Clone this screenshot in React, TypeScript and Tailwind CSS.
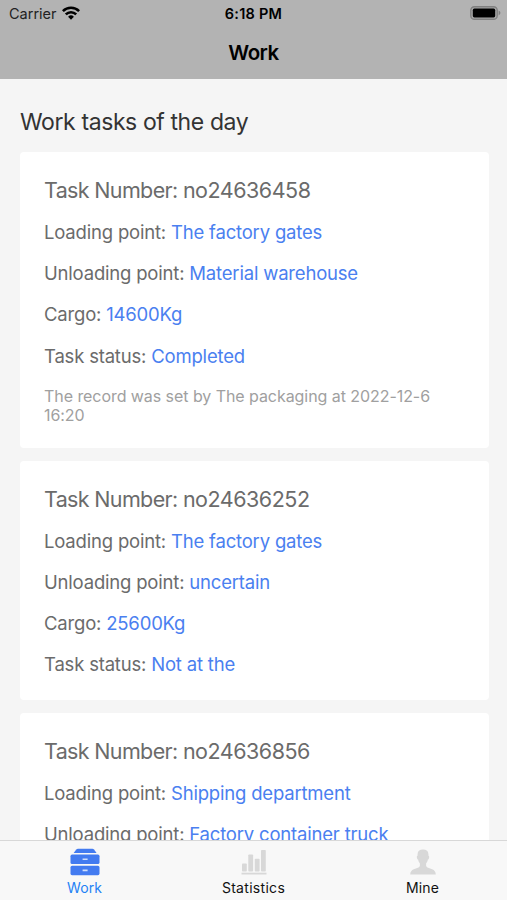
import React from 'react';

type Task = {
  number: string;
  loading: string;
  unloading: string;
  cargo?: string;
  status?: string;
  note?: string;
};

const tasks: Task[] = [
  {
    number: 'no24636458',
    loading: 'The factory gates',
    unloading: 'Material warehouse',
    cargo: '14600Kg',
    status: 'Completed',
    note: 'The record was set by The packaging at 2022-12-6 16:20',
  },
  {
    number: 'no24636252',
    loading: 'The factory gates',
    unloading: 'uncertain',
    cargo: '25600Kg',
    status: 'Not at the',
  },
  {
    number: 'no24636856',
    loading: 'Shipping department',
    unloading: 'Factory container truck',
  },
];

const WifiIcon = () => (
  <svg width="18" height="14" viewBox="0 0 18 14" fill="none" stroke="#000" strokeWidth="2.6">
    <path d="M0.9 5.1a11.6 11.6 0 0 1 16.2 0" />
    <path d="M3.8 8.4a7.4 7.4 0 0 1 10.4 0" />
    <path d="M9 13.7 6.1 10.7a4.1 4.1 0 0 1 5.8 0Z" fill="#000" stroke="none" />
  </svg>
);

const BatteryIcon = () => (
  <svg width="31" height="14" viewBox="0 0 31 14">
    <rect x="0.8" y="0.7" width="26.4" height="12.6" rx="3.6" fill="#a8a8a8" stroke="#808080" strokeWidth="1.4" />
    <rect x="2.8" y="2.6" width="22.4" height="8.8" rx="1.6" fill="#000" />
    <path d="M28.6 4.6c2.4 1 2.4 3.8 0 4.8Z" fill="#808080" />
  </svg>
);

const DrawerIcon = () => (
  <svg width="30" height="28" viewBox="0 0 30 28" fill="#437bf0">
    <path d="M8 0.8h14.4c.7 0 1.2.2 1.6.7L26.6 5H3.6L6.3 1.5C6.7 1 7.3.8 8 .8Z" />
    <rect x="0.5" y="6.6" width="29" height="9.4" rx="1.6" />
    <rect x="0.5" y="17.8" width="29" height="9.4" rx="1.6" />
    <path d="M12.6 11.3h5M12.6 22.4h5" stroke="#cfdefc" strokeWidth="1.6" />
  </svg>
);

const ChartIcon = () => (
  <svg width="26" height="26" viewBox="0 0 26 26" fill="#d8d8d8">
    <rect x="1" y="14.5" width="4.8" height="8" rx="0.8" />
    <rect x="7.3" y="5.5" width="4.8" height="17" rx="0.8" />
    <rect x="13.8" y="9.8" width="4.8" height="12.7" rx="0.8" />
    <rect x="20" y="1" width="4.8" height="21.5" rx="0.8" />
    <rect x="0.5" y="23.7" width="25" height="1.8" />
  </svg>
);

const PersonIcon = () => (
  <svg width="26" height="26" viewBox="0 0 26 26" fill="#d8d8d8">
    <path d="M13 .4c3.6 0 5.300 1.5 5.4 4.6l.1 1.7c.7.3.8 1.1.6 2-.2 1-.6 1.7-1.2 1.9-.3 1.7-.9 2.9-1.8 3.9v2.1c0 .9.5 1.4 1.4 1.8l4.7 1.9c2.3.9 3.4 2.4 3.6 5.200H.2c.2-2.8 1.3-4.3 3.6-5.200l4.7-1.900c.9-.4 1.4-.9 1.4-1.8v-2.1c-.9-1-1.5-2.2-1.8-3.9-.6-.2-1-.9-1.2-1.9-.2-.9-.1-1.7.6-2L7.600 5C7.700 1.9 9.4.4 13 .4Z" />
  </svg>
);

const Row = ({ label, value }: { label: string; value: string }) => (
  <p className="mt-[18.1px] text-[18.5px] leading-[23px] tracking-[-0.19px] whitespace-nowrap">
    {label}: <span className="text-[#4a80f0]">{value}</span>
  </p>
);

const App = () => {
  return (
    <div className="flex h-[900px] w-[507px] flex-col overflow-hidden bg-[#f5f5f5] font-['Inter',sans-serif]">
      <header className="h-[79px] shrink-0 bg-[#b3b3b3] text-black">
        <div className="grid h-7 grid-cols-3 items-center pr-[6px] pl-[9px]">
          <div className="flex items-center gap-[5px] text-[14.5px] text-[#222]">
            Carrier
            <span className="-mt-[2px]">
              <WifiIcon />
            </span>
          </div>
          <div className="-ml-[3px] text-center text-[14.5px] font-semibold tracking-[0.25px]">6:18 PM</div>
          <div className="-mt-[2px] flex justify-end">
            <BatteryIcon />
          </div>
        </div>
        <h1 className="text-center text-[20.5px] leading-[49px] font-semibold tracking-[-0.5px]">Work</h1>
      </header>

      <main className="min-h-0 flex-1 overflow-hidden pr-[18px] pl-5">
        <h2 className="pt-[27px] pb-[14px] text-[23px] leading-8 tracking-[-0.4px] text-[#333]">
          Work tasks of the day
        </h2>
        <div className="flex flex-col gap-[13px]">
          {tasks.map((task) => (
            <section key={task.number} className="rounded-[4px] bg-white px-6 pt-[25px] pb-[23.2px] text-[#6b6b6b]">
              <h3 className="text-[21.5px] leading-[26.2px] tracking-[-0.49px]">
                <span className="tracking-[-0.65px]">Task Number: </span>
                {task.number}
              </h3>
              <Row label="Loading point" value={task.loading} />
              <Row label="Unloading point" value={task.unloading} />
              {task.cargo && <Row label="Cargo" value={task.cargo} />}
              {task.status && <Row label="Task status" value={task.status} />}
              {task.note && (
                <p className="mt-[19px] text-[16px] leading-[19px] tracking-[-0.06px] text-[#a0a0a0]">{task.note}</p>
              )}
            </section>
          ))}
        </div>
      </main>

      <nav className="grid h-[60px] shrink-0 grid-cols-3 border-t border-[#d8d8d8] bg-[#f8f8f8] text-[14px] leading-5 text-[#111]">
        <div className="flex flex-col items-center text-[#1f82f5]">
          <div className="flex h-[37px] items-end pb-[2px]">
            <DrawerIcon />
          </div>
          <span className="tracking-[0.1px]">Work</span>
        </div>
        <div className="flex flex-col items-center">
          <div className="flex h-[37px] items-end pb-[3px]">
            <ChartIcon />
          </div>
          <span className="tracking-[0.3px]">Statistics</span>
        </div>
        <div className="flex flex-col items-center">
          <div className="flex h-[37px] items-end pb-[3px]">
            <PersonIcon />
          </div>
          <span className="tracking-[0.1px]">Mine</span>
        </div>
      </nav>
    </div>
  );
};

export default App;
